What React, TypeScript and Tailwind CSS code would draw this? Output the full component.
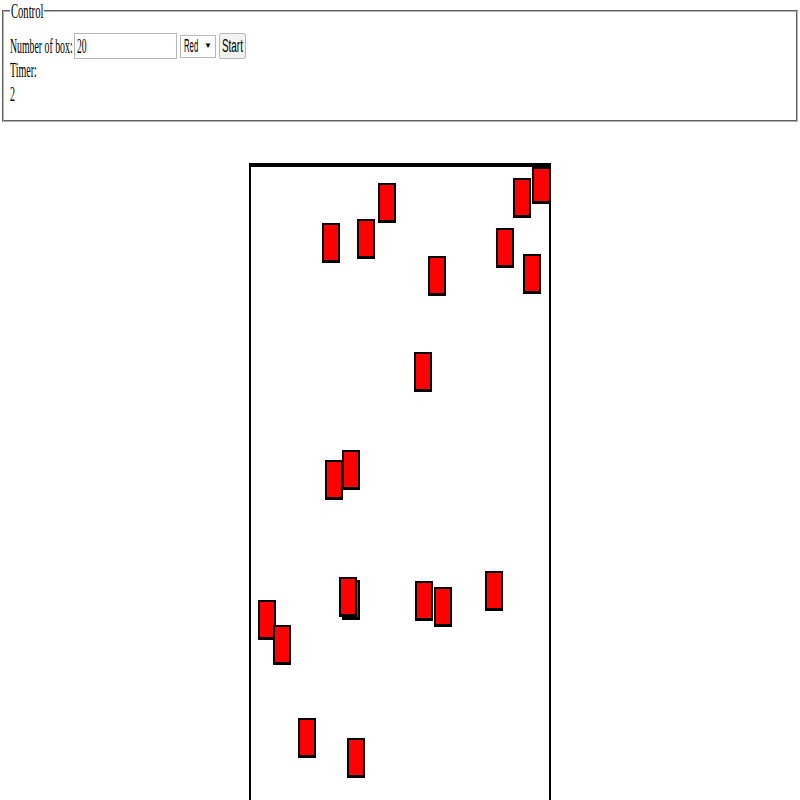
import React from 'react'

// squashed text, the capture is narrow horizontally
function Sq({ children, s = 'scale-x-[0.5]' }: { children: React.ReactNode; s?: string }) {
  return <span className={`inline-block origin-left whitespace-nowrap ${s}`}>{children}</span>
}

const boxes: { x: number; y: number }[] = [
  { x: 71, y: 56 },
  { x: 106, y: 52 },
  { x: 127, y: 16 },
  { x: 262, y: 11 },
  { x: 245, y: 61 },
  { x: 272, y: 87 },
  { x: 177, y: 89 },
  { x: 163, y: 185 },
  { x: 91, y: 283 },
  { x: 74, y: 293 },
  { x: 91, y: 413 },
  { x: 88, y: 410 },
  { x: 7, y: 433 },
  { x: 22, y: 458 },
  { x: 164, y: 414 },
  { x: 183, y: 420 },
  { x: 234, y: 404 },
  { x: 47, y: 551 },
  { x: 96, y: 571 },
]

export default function App() {
  return (
    <div className="h-screen overflow-hidden bg-white font-['Liberation_Serif','Times_New_Roman',serif] text-[20px] text-black">
      {/* Control panel */}
      <fieldset className="mx-[2px] border-2 border-[#b4b4b4] px-[6px] pb-[14px] [border-style:groove]">
        <legend className="px-[1px] leading-[22px]">
          <span className="inline-block w-[32px]">
            <Sq s="scale-x-[0.53]">Control</Sq>
          </span>
        </legend>
        <div className="mt-[11px] flex h-[26px] items-center">
          <span className="w-[64px] leading-[24px]">
            <Sq s="scale-x-[0.49]">Number of box:</Sq>
          </span>
          <div className="flex h-[26px] w-[103px] items-center border border-[#b8b8b8] pl-[2px] leading-[24px]">
            <Sq s="scale-x-[0.48]">20</Sq>
          </div>
          <div className="ml-[3px] flex h-[23px] w-[36px] items-center justify-between border border-[#b8b8b8] pl-[3px] pr-[3px] font-['Liberation_Sans',Arial,sans-serif] text-[18px]">
            <span className="w-[16px] leading-[22px]">
              <Sq s="scale-x-[0.43]">Red</Sq>
            </span>
            <span className="text-[8px] leading-none">▼</span>
          </div>
          <button className="ml-[3px] flex h-[26px] w-[27px] items-center justify-center rounded-[2px] border border-[#b8b8b8] bg-[#f2f2f2] font-['Liberation_Sans',Arial,sans-serif] text-[18px]">
            <span className="w-[21px] text-left leading-[22px]">
              <Sq s="scale-x-[0.55]">Start</Sq>
            </span>
          </button>
        </div>
        <div className="-mt-[1px] leading-[24px]">
          <Sq s="scale-x-[0.5]">Timer:</Sq>
        </div>
        <div className="leading-[24px]">
          <Sq s="scale-x-[0.5]">2</Sq>
        </div>
      </fieldset>

      {/* Play area */}
      <div className="relative mx-auto mt-[41px] h-[700px] w-[302px] border-x-2 border-t-4 border-black">
        {boxes.map((b, i) => (
          <div
            key={i}
            className="absolute h-[40px] w-[18px] border-2 border-b-[3px] border-black bg-[#ff0000]"
            style={{ left: b.x, top: b.y }}
          />
        ))}
        <div className="absolute left-[281px] top-[-4px] h-[41px] w-[19px] border-2 border-t-[6px] border-b-[3px] border-black bg-[#ff0000]" />
      </div>
    </div>
  )
}
